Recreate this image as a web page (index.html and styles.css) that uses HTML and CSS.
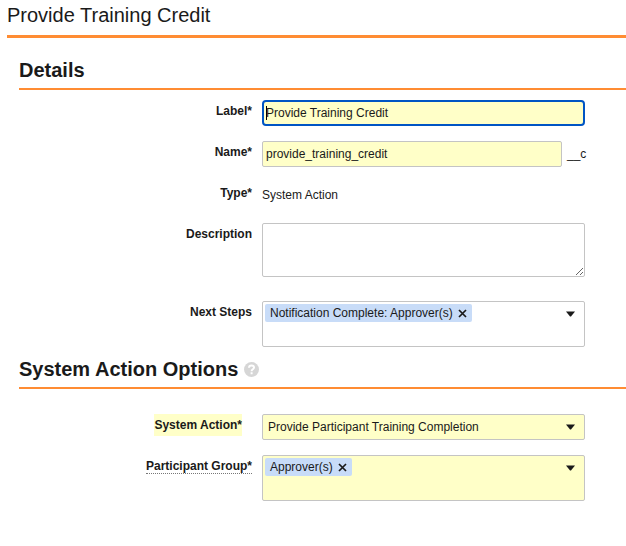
FILE: index.html
```html
<!DOCTYPE html>
<html lang="en">
<head>
<meta charset="utf-8">
<meta name="viewport" content="width=device-width, initial-scale=1">
<title>Provide Training Credit</title>
<link rel="stylesheet" href="styles.css">
</head>
<body>
<main class="page">
  <h1 class="page-title">Provide Training Credit</h1>
  <form class="form">
    <section class="section">
      <h2 class="section-title">Details</h2>
      <div class="rows">
        <div class="row">
          <label class="label" for="label">Label*</label>
          <div class="control">
            <input class="field required active" id="label" type="text" value="Provide Training Credit">
            <span class="caret"></span>
          </div>
        </div>
        <div class="row">
          <label class="label" for="name">Name*</label>
          <div class="control suffixed">
            <input class="field required" id="name" type="text" value="provide_training_credit">
            <span class="suffix">__c</span>
          </div>
        </div>
        <div class="row">
          <span class="label">Type*</span>
          <div class="control static">System Action</div>
        </div>
        <div class="row tall">
          <label class="label" for="description">Description</label>
          <div class="control"><textarea class="field area" id="description"></textarea></div>
        </div>
        <div class="row">
          <span class="label" id="next-steps">Next Steps</span>
          <div class="control field multi" role="group" aria-labelledby="next-steps">
            <span class="chip">Notification Complete: Approver(s)
              <button class="remove" type="button" aria-label="Remove"><svg width="9" height="9" viewBox="0 0 9 9"><path d="M1 1L8 8M8 1L1 8"/></svg></button>
            </span>
            <button class="toggle" type="button" aria-label="Open"><svg width="9" height="6" viewBox="0 0 9 6"><path d="M0 0.5H9L5 5.5H4Z"/></svg></button>
          </div>
        </div>
      </div>
    </section>
    <section class="section">
      <h2 class="section-title">System Action Options
        <svg class="help" width="15" height="15" viewBox="0 0 15 15" role="img" aria-label="Help"><circle cx="7.5" cy="7.5" r="7.5"/><path d="M5 5.8C5 4.2 6 3.4 7.5 3.4S10 4.3 10 5.6C10 7.3 7.6 7.3 7.6 9.2M7.6 10.3V12.2"/></svg>
      </h2>
      <div class="rows options">
        <div class="row">
          <label class="label" for="action"><span class="marked">System Action*</span></label>
          <div class="control">
            <select class="field required picker" id="action"><option>Provide Participant Training Completion</option></select>
            <svg class="arrow" width="9" height="6" viewBox="0 0 9 6"><path d="M0 0.5H9L5 5.5H4Z"/></svg>
          </div>
        </div>
        <div class="row">
          <span class="label" id="group"><span class="hinted">Participant Group*</span></span>
          <div class="control field multi required" role="group" aria-labelledby="group">
            <span class="chip">Approver(s)
              <button class="remove" type="button" aria-label="Remove"><svg width="9" height="9" viewBox="0 0 9 9"><path d="M1 1L8 8M8 1L1 8"/></svg></button>
            </span>
            <button class="toggle" type="button" aria-label="Open"><svg width="9" height="6" viewBox="0 0 9 6"><path d="M0 0.5H9L5 5.5H4Z"/></svg></button>
          </div>
        </div>
      </div>
    </section>
  </form>
</main>
</body>
</html>
```
FILE: styles.css
```css
* {
  box-sizing: border-box;
}

body {
  margin: 0;
  background: #fff;
  color: #1a1a1a;
  font: 12px/22px "Liberation Sans", Arial, sans-serif;
}

.page {
  padding: 3px 0 24px 7px;
}

.page-title {
  margin: 0;
  padding-bottom: 8px;
  border-bottom: 3px solid #ff8c33;
  font-size: 20px;
  font-weight: 400;
  line-height: 24px;
}

.form {
  padding: 20px 0 0 12px;
}

.section-title {
  display: flex;
  align-items: center;
  gap: 6px;
  margin: 0;
  padding-bottom: 6px;
  border-bottom: 2px solid #ff8c33;
  font-size: 20px;
  line-height: 24px;
}

.help {
  fill: #d6d6d6;
}

.help path {
  fill: none;
  stroke: #fff;
  stroke-width: 2;
}

.rows {
  display: grid;
  gap: 15px;
  padding: 10px 0;
}

.options {
  padding-top: 25px;
}

.row {
  display: grid;
  grid-template-columns: 233px minmax(0, 323px);
  column-gap: 10px;
  min-height: 26px;
}

.tall {
  padding-bottom: 9px;
}

.label {
  font-weight: 700;
  text-align: right;
}

.marked {
  display: inline-block;
  margin-right: 10px;
  background: #ffffc8;
}

.hinted {
  border-bottom: 1px dotted #777;
}

.control {
  position: relative;
}

.field {
  display: block;
  width: 100%;
  height: 26px;
  margin: 0;
  padding: 0 3px;
  border: 1px solid #c4c4c4;
  border-radius: 2px;
  outline: 0;
  background: #fff;
  color: inherit;
  font: inherit;
}

.required {
  background: #ffffc8;
}

.active {
  padding: 0 2px;
  border: 2px solid #0055c4;
  border-radius: 4px;
}

.caret {
  position: absolute;
  top: 6px;
  left: 4px;
  width: 1px;
  height: 14px;
  background: #000;
}

.suffixed {
  display: flex;
  gap: 5px;
  margin-right: -2px;
}

.suffixed .field {
  flex: 0 1 300px;
}

.suffix,
.static {
  line-height: 26px;
}

.area {
  height: 54px;
  resize: both;
}

.multi {
  display: flex;
  justify-content: space-between;
  align-items: flex-start;
  height: 46px;
  padding: 2px 9px 0 2px;
}

.chip {
  display: flex;
  align-items: center;
  gap: 5px;
  padding: 0 5px;
  border-radius: 2px;
  background: #c8dcf8;
  line-height: 18px;
}

.remove,
.toggle {
  display: flex;
  padding: 0;
  border: 0;
  background: none;
}

.remove path {
  stroke: #1a1a1a;
  stroke-width: 1.7;
}

.toggle {
  padding-top: 7px;
}

.toggle path,
.arrow path {
  fill: #1a1a1a;
}

.picker {
  padding: 0 24px 0 5px;
  appearance: none;
}

.arrow {
  position: absolute;
  top: 10px;
  right: 10px;
  pointer-events: none;
}
```
